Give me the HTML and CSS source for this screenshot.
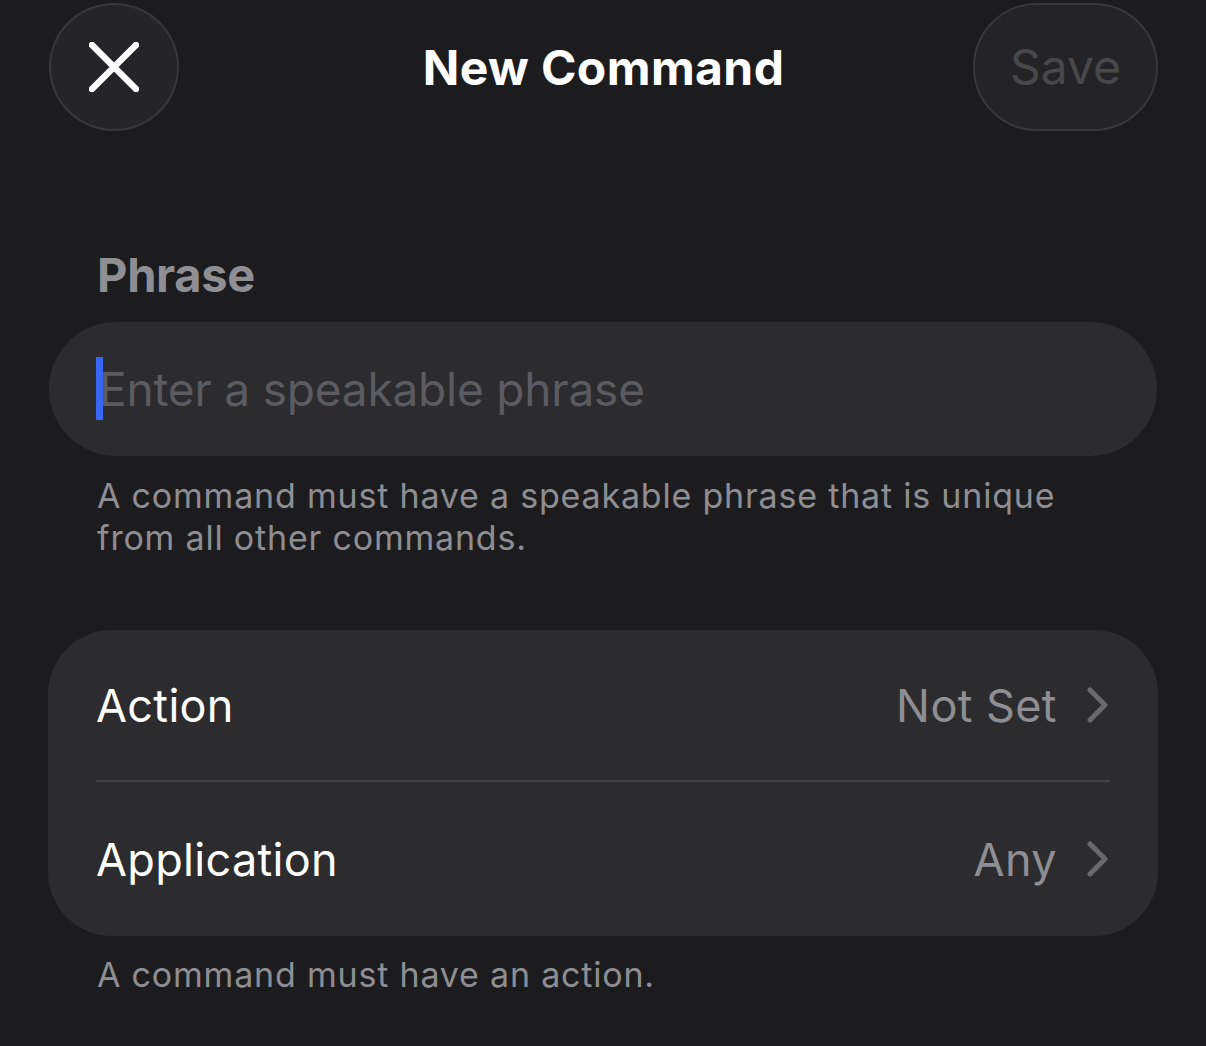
FILE: index.html
```html
<!DOCTYPE html>
<html lang="en">
<head>
  <meta charset="UTF-8">
  <title>New Command</title>
  <meta name="viewport" content="width=device-width, initial-scale=1.0">
  <link rel="stylesheet" href="styles.css">
</head>
<body>
  <header class="nav">
    <button class="close-btn" aria-label="Close">
      <svg width="50" height="50" viewBox="0 0 50 50">
        <path d="M3 3 L47 47 M47 3 L3 47" stroke="#fff" stroke-width="6.5" stroke-linecap="round" fill="none"/>
      </svg>
    </button>
    <h1 class="nav-title">New Command</h1>
    <button class="save-btn" disabled>Save</button>
  </header>

  <main class="content">
    <section class="group">
      <h2 class="group-label">Phrase</h2>
      <div class="field">
        <span class="caret"></span>
        <span class="placeholder">Enter a speakable phrase</span>
      </div>
      <p class="hint">A command must have a speakable phrase that is unique from all other commands.</p>
    </section>

    <section class="group">
      <div class="card">
        <div class="row">
          <span class="row-title">Action</span>
          <span class="row-value">Not Set</span>
          <svg class="chevron" width="22" height="36" viewBox="0 0 22 36">
            <path d="M3 3 L18 18 L3 33" stroke="#68686d" stroke-width="5" stroke-linecap="round" stroke-linejoin="round" fill="none"/>
          </svg>
        </div>
        <div class="divider"></div>
        <div class="row">
          <span class="row-title">Application</span>
          <span class="row-value">Any</span>
          <svg class="chevron" width="22" height="36" viewBox="0 0 22 36">
            <path d="M3 3 L18 18 L3 33" stroke="#68686d" stroke-width="5" stroke-linecap="round" stroke-linejoin="round" fill="none"/>
          </svg>
        </div>
      </div>
      <p class="hint">A command must have an action.</p>
    </section>
  </main>
</body>
</html>
```

FILE: styles.css
```css
body { margin: 0; background: #1c1c1e; font-family: Inter, "Noto Sans", sans-serif; color: #fff; }

/* Top bar */
.nav { display: grid; grid-template-columns: 1fr auto 1fr; align-items: center; padding: 2px 48px 0 49px; height: 130px; }
.close-btn { width: 130px; height: 128px; border-radius: 50%; background: #252527; border: 2px solid #38383a; display: flex; align-items: center; justify-content: center; padding: 0; justify-self: start; }
.nav-title { margin: 0; font-size: 48px; font-weight: 700; letter-spacing: 0.4px; }
.save-btn { justify-self: end; width: 185px; height: 128px; border-radius: 64px; background: #242426; border: 2px solid #38383a; color: #48484a; font-family: inherit; font-size: 48px; padding: 0 0 2px; }

/* Sections */
.content { padding: 0 48px; }
.group-label { margin: 114px 0 18px 49px; font-size: 47px; line-height: 58px; font-weight: 700; color: #8e8e93; letter-spacing: -0.3px; }

.field { height: 134px; border-radius: 67px; background: #2c2c2e; display: flex; align-items: center; padding-left: 48px; position: relative; margin-left: 1px; margin-right: 1px; }
.caret { position: absolute; left: 47px; top: 35px; width: 7px; height: 63px; background: #3a66f5; }
.placeholder { font-size: 46px; color: #5b5b60; padding-left: 2px; letter-spacing: -0.2px; }

.hint { margin: 19px 0 0 49px; font-size: 34px; line-height: 42px; color: #8e8e93; letter-spacing: 0.8px; max-width: 1000px; }

.group + .group { margin-top: 71px; }

/* List card */
.card { background: #2c2c2e; border-radius: 64px; padding: 0 48px; }
.row { display: flex; align-items: center; height: 150px; }
.row:last-child { height: 154px; }
.row-title { flex: 1; font-size: 45px; letter-spacing: 0.3px; }
.row-value { font-size: 45px; color: #8e8e93; margin-right: 30px; letter-spacing: 0.4px; }
.chevron { margin-right: 1px; }
.divider { height: 2px; background: #434346; }
.card + .hint { margin-top: 18px; }
```
